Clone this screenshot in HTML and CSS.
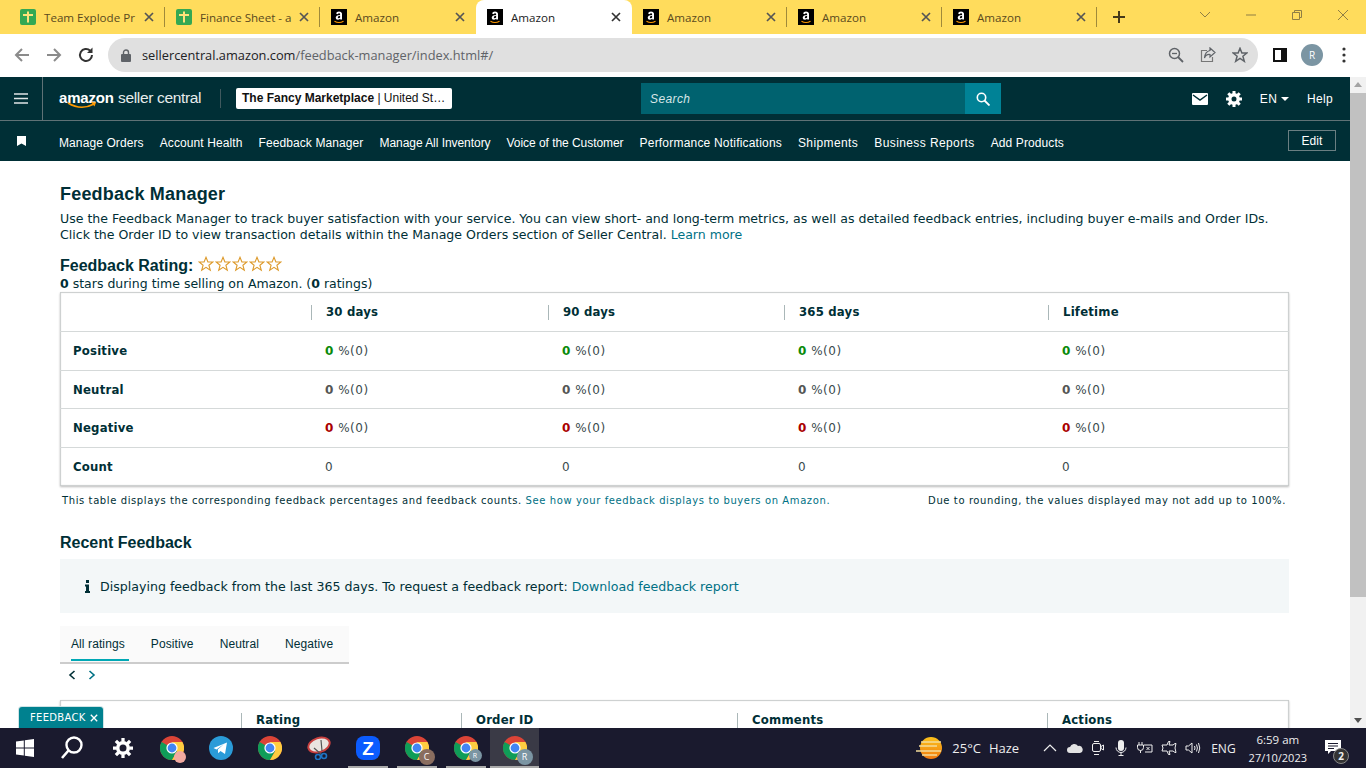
FILE: index.html
```html
<!DOCTYPE html>
<html lang="en">
<head>
<meta charset="utf-8">
<title>Feedback Manager</title>
<link rel="stylesheet" href="styles.css">
</head>
<body>
<svg class="defs" width="0" height="0" aria-hidden="true">
  <symbol id="chrome" viewBox="0 0 24 24">
    <circle cx="12" cy="12" r="12" fill="#db4437"/>
    <path d="M12 12 1.6 6A12 12 0 0 0 12 24l5.2-9z" fill="#0f9d58"/>
    <path d="M12 6h10.4A12 12 0 0 1 12 24l5.2-9z" fill="#ffcd40"/>
    <circle cx="12" cy="12" r="5.6" fill="#fff"/>
    <circle cx="12" cy="12" r="4.4" fill="#4285f4"/>
  </symbol>
  <symbol id="amz" viewBox="0 0 16 16">
    <rect width="16" height="16" fill="#000"/>
    <path d="M3.5 12.2q4.5 2.6 9 0" fill="none" stroke="#f90" stroke-width="1.2"/>
    <path d="M5 4.6q.5-2 3-2t3 2v6h-1.7l-.2-.8q-1 1-2.300 1-2.100 0-2.100-2.100 0-2.300 4.400-2.700v-.6q0-1.200-1-1.200t-1.300 1zM9.100 6.800q-2.300.3-2.300 1.500 0 1 .9 1t1.400-.8z" fill="#fff" fill-rule="evenodd"/>
  </symbol>
  <symbol id="sheet" viewBox="0 0 16 16">
    <rect width="16" height="16" rx="2" fill="#34a853"/>
    <path d="M7 2.500h2v11H7zM3 5h10v2H3z" fill="#ffe27a"/>
  </symbol>
  <symbol id="star" viewBox="0 0 16 16">
    <path d="M8 1.300 9.900 6h5l-4 3.200 1.400 5.100L8 11.400l-4.300 2.900 1.400-5.100-4-3.200h5z" fill="#fff" stroke="#dd9a2b" stroke-width="1.100"/>
  </symbol>
  <symbol id="x" viewBox="0 0 10 10">
    <path d="M1 1l8 8M9 1 1 9" fill="none" stroke="currentColor" stroke-width="1.700"/>
  </symbol>
</svg>

<div class="tabstrip">
  <div class="tab wide"><svg class="fav"><use href="#sheet"/></svg><span class="tab-title">Team Explode Pr</span><svg class="tab-x"><use href="#x"/></svg></div>
  <div class="tab"><svg class="fav"><use href="#sheet"/></svg><span class="tab-title">Finance Sheet - a</span><svg class="tab-x"><use href="#x"/></svg></div>
  <div class="tab wide no-sep"><svg class="fav"><use href="#amz"/></svg><span class="tab-title">Amazon</span><svg class="tab-x"><use href="#x"/></svg></div>
  <div class="tab wide active"><svg class="fav"><use href="#amz"/></svg><span class="tab-title">Amazon</span><svg class="tab-x"><use href="#x"/></svg></div>
  <div class="tab"><svg class="fav"><use href="#amz"/></svg><span class="tab-title">Amazon</span><svg class="tab-x"><use href="#x"/></svg></div>
  <div class="tab"><svg class="fav"><use href="#amz"/></svg><span class="tab-title">Amazon</span><svg class="tab-x"><use href="#x"/></svg></div>
  <div class="tab"><svg class="fav"><use href="#amz"/></svg><span class="tab-title">Amazon</span><svg class="tab-x"><use href="#x"/></svg></div>
  <svg class="newtab" width="14" height="14" viewBox="0 0 14 14"><path d="M7 1v12M1 7h12" stroke="#45391a" stroke-width="2"/></svg>
  <div class="winctl">
    <svg width="46" height="12" viewBox="0 0 46 12"><path d="M18 3l5 5 5-5" fill="none" stroke="#8f7e45"/></svg>
    <svg width="46" height="12" viewBox="0 0 46 12"><path d="M18 6h10" stroke="#8f7e45"/></svg>
    <svg width="46" height="12" viewBox="0 0 46 12"><path d="M18.500 3.500h7v7h-7zM20.500 3.500v-2h7v7h-2" fill="none" stroke="#8f7e45"/></svg>
    <svg width="46" height="12" viewBox="0 0 46 12"><path d="M18 1l10 10M28 1L18 11" stroke="#8f7e45"/></svg>
  </div>
</div>

<div class="toolbar">
  <svg class="tb-ic" width="18" height="18" viewBox="0 0 18 18"><path d="M16 9H3M9 3 3 9l6 6" fill="none" stroke="#8b8b8b" stroke-width="2"/></svg>
  <svg class="tb-ic" width="18" height="18" viewBox="0 0 18 18"><path d="M2 9h13M9 3l6 6-6 6" fill="none" stroke="#8b8b8b" stroke-width="2"/></svg>
  <svg class="tb-ic" width="18" height="18" viewBox="0 0 18 18"><path d="M15 9a6 6 0 1 1-1.800-4.300" fill="none" stroke="#333" stroke-width="2"/><path d="M15.500 1.500v5.500H10z" fill="#333"/></svg>
  <div class="omnibox">
    <svg width="10" height="13" viewBox="0 0 10 13"><path d="M2.500 5V3.500a2.500 2.500 0 0 1 5 0V5" fill="none" stroke="#5f6368" stroke-width="1.400"/><rect y="5" width="10" height="8" rx="1" fill="#5f6368"/></svg>
    <span class="url"><span class="url-host">sellercentral.amazon.com</span>/feedback-manager/index.html#/</span>
    <span class="omni-right">
      <svg width="16" height="16" viewBox="0 0 16 16"><circle cx="6.500" cy="6.500" r="5" fill="none" stroke="#5f6368" stroke-width="1.500"/><path d="M10 10l5 5" stroke="#5f6368" stroke-width="1.800"/><path d="M4 6.500h5" stroke="#5f6368" stroke-width="1.300"/></svg>
      <svg width="16" height="16" viewBox="0 0 16 16"><path d="M7 3.500H1.500v11h11V10" fill="none" stroke="#777" stroke-width="1.200"/><path d="M10 1l5 4.500L10 10V7.500Q6 7 4.500 11 5 4.500 10 3.500z" fill="none" stroke="#5f6368" stroke-width="1.200"/></svg>
      <svg width="16" height="16" viewBox="0 0 16 16"><path d="M8 1.300 9.900 6h5l-4 3.200 1.400 5.100L8 11.400l-4.300 2.900 1.400-5.100-4-3.200h5z" fill="none" stroke="#5f6368" stroke-width="1.500"/></svg>
    </span>
  </div>
  <svg class="panel" width="14" height="14" viewBox="0 0 14 14"><rect width="14" height="14" fill="#111"/><rect x="2" y="2" width="6" height="10" fill="#fff"/></svg>
  <span class="avatar">R</span>
  <svg class="menu-dots" width="4" height="16" viewBox="0 0 4 16"><circle cx="2" cy="2" r="1.600" fill="#333"/><circle cx="2" cy="8" r="1.600" fill="#333"/><circle cx="2" cy="14" r="1.600" fill="#333"/></svg>
</div>

<div class="viewport">
  <div class="page">
    <header class="masthead">
      <div class="burger"><svg width="14" height="11" viewBox="0 0 14 11"><path d="M0 1h14M0 5.500h14M0 10h14" stroke="#dfe5e6" stroke-width="1.600"/></svg></div>
      <div class="logo"><span class="logo-a">amazon</span> <span class="logo-b">seller central</span>
        <svg class="logo-smile" width="30" height="8" viewBox="0 0 30 8"><path d="M1 1q13 8 26 1" fill="none" stroke="#f90" stroke-width="1.600"/><path d="M24 0l5 .5-1.500 4z" fill="#f90"/></svg>
      </div>
      <div class="store"><b>The Fancy Marketplace</b> | United St…</div>
      <div class="search"><span class="search-text">Search</span><span class="search-btn"><svg width="14" height="14" viewBox="0 0 14 14"><circle cx="5.500" cy="5.500" r="4.200" fill="none" stroke="#fff" stroke-width="1.600"/><path d="M8.500 8.500l5 5" stroke="#fff" stroke-width="1.800"/></svg></span></div>
      <div class="mast-right">
        <svg width="16" height="12" viewBox="0 0 16 12"><rect width="16" height="12" rx="1" fill="#fff"/><path d="M1 2l7 5 7-5" fill="none" stroke="#002f36" stroke-width="1.500"/></svg>
        <svg width="16" height="16" viewBox="0 0 16 16"><circle cx="8" cy="8" r="4.200" fill="none" stroke="#fff" stroke-width="3.400"/><path d="M8 0v3M8 13v3M0 8h3M13 8h3M2.300 2.300l2.100 2.100M11.600 11.600l2.100 2.100M13.700 2.300l-2.100 2.100M4.400 11.600l-2.100 2.100" stroke="#fff" stroke-width="3"/></svg>
        <span class="lang">EN<i class="caret"></i></span>
        <span class="help">Help</span>
      </div>
    </header>
    <nav class="navbar">
      <svg class="bookmark" width="9" height="10" viewBox="0 0 9 10"><path d="M0 0h9v10L4.500 7.500 0 10z" fill="#fff"/></svg>
      <a>Manage Orders</a><a>Account Health</a><a>Feedback Manager</a><a class="tight">Manage All Inventory</a><a class="tight">Voice of the Customer</a><a class="loose">Performance Notifications</a><a class="looser">Shipments</a><a class="looser">Business Reports</a><a>Add Products</a>
      <span class="edit">Edit</span>
    </nav>

    <main class="content">
      <h1>Feedback Manager</h1>
      <p class="intro">Use the Feedback Manager to track buyer satisfaction with your service. You can view short- and long-term metrics, as well as detailed feedback entries, including buyer e-mails and Order IDs. Click the Order ID to view transaction details within the Manage Orders section of Seller Central. <a class="link">Learn more</a></p>
      <div class="rating-head"><h2>Feedback Rating:</h2><span class="stars"><svg><use href="#star"/></svg><svg><use href="#star"/></svg><svg><use href="#star"/></svg><svg><use href="#star"/></svg><svg><use href="#star"/></svg></span></div>
      <p class="rating-sub"><b>0</b> stars during time selling on Amazon. (<b>0</b> ratings)</p>

      <table class="card metrics">
        <colgroup><col class="m1"><col class="m2"><col class="m3"><col class="m4"><col></colgroup>
        <thead><tr><th></th><th><span>30 days</span></th><th><span>90 days</span></th><th><span>365 days</span></th><th><span>Lifetime</span></th></tr></thead>
        <tbody>
          <tr><th>Positive</th><td><b class="pos">0</b> %(0)</td><td><b class="pos">0</b> %(0)</td><td><b class="pos">0</b> %(0)</td><td><b class="pos">0</b> %(0)</td></tr>
          <tr><th>Neutral</th><td><b class="neu">0</b> %(0)</td><td><b class="neu">0</b> %(0)</td><td><b class="neu">0</b> %(0)</td><td><b class="neu">0</b> %(0)</td></tr>
          <tr><th>Negative</th><td><b class="neg">0</b> %(0)</td><td><b class="neg">0</b> %(0)</td><td><b class="neg">0</b> %(0)</td><td><b class="neg">0</b> %(0)</td></tr>
          <tr><th>Count</th><td>0</td><td>0</td><td>0</td><td>0</td></tr>
        </tbody>
      </table>
      <div class="note"><span>This table displays the corresponding feedback percentages and feedback counts. <a class="link">See how your feedback displays to buyers on Amazon.</a></span><span>Due to rounding, the values displayed may not add up to 100%.</span></div>

      <h2 class="recent">Recent Feedback</h2>
      <div class="infobox"><svg width="5" height="13" viewBox="0 0 5 13"><rect x="1" width="3" height="3" fill="#002f36"/><path d="M0 4.500h4V11h1v2H0v-2h1V6.500H0z" fill="#002f36"/></svg><span>Displaying feedback from the last 365 days. To request a feedback report: <a class="link">Download feedback report</a></span></div>

      <div class="rtabs"><a class="on">All ratings</a><a>Positive</a><a>Neutral</a><a>Negative</a></div>
      <div class="pager">
        <svg width="8" height="10" viewBox="0 0 8 10"><path d="M6.500 1l-4.500 4 4.500 4" fill="none" stroke="#002f36" stroke-width="1.600"/></svg>
        <svg width="8" height="10" viewBox="0 0 8 10"><path d="M1.500 1l4.500 4-4.500 4" fill="none" stroke="#007185" stroke-width="1.600"/></svg>
      </div>

      <table class="card recent-table">
        <colgroup><col class="r1"><col class="r2"><col class="r3"><col class="r4"><col></colgroup>
        <thead><tr><th></th><th><span>Rating</span></th><th><span>Order ID</span></th><th><span>Comments</span></th><th><span>Actions</span></th></tr></thead>
      </table>
    </main>
    <div class="feedback-tab">FEEDBACK <svg class="fb-x"><use href="#x"/></svg></div>
  </div>
  <div class="scrollbar">
    <svg width="16" height="16" viewBox="0 0 16 16"><path d="M8 5l4 5H4z" fill="#a3a3a3"/></svg>
    <div class="thumb"></div>
    <svg class="sb-down" width="16" height="16" viewBox="0 0 16 16"><path d="M8 11l4-5H4z" fill="#505050"/></svg>
  </div>
</div>

<footer class="taskbar">
  <div class="tb-item"><svg width="18" height="18" viewBox="0 0 18 18"><path d="M0 2.500 7.800 1.400v7.100H0zM8.800 1.300 18 0v8.500H8.800zM0 9.500h7.800v7.100L0 15.500zM8.800 9.500H18V18l-9.200-1.300z" fill="#fff"/></svg></div>
  <div class="tb-item search-ic"><svg width="24" height="26" viewBox="0 0 24 26"><circle cx="14" cy="10" r="7.500" fill="none" stroke="#fff" stroke-width="2.400"/><path d="M8.500 15.500 2 23" stroke="#fff" stroke-width="2.600"/></svg></div>
  <div class="tb-item"><svg width="20" height="20" viewBox="0 0 16 16"><circle cx="8" cy="8" r="4.200" fill="none" stroke="#fff" stroke-width="2.800"/><path d="M8 0v3M8 13v3M0 8h3M13 8h3M2.300 2.300l2.100 2.100M11.600 11.600l2.100 2.100M13.700 2.300l-2.100 2.100M4.400 11.600l-2.100 2.100" stroke="#fff" stroke-width="2.600"/></svg></div>
  <div class="tb-item"><span class="appwrap"><svg class="app"><use href="#chrome"/></svg><i class="badge pink"></i></span></div>
  <div class="tb-item"><svg class="app" viewBox="0 0 24 24"><circle cx="12" cy="12" r="12" fill="#2a9bd8"/><path d="M4.500 12 18 6.500 16 18l-4.500-3-2.300 2.200-.4-3.700 6.200-5.500L7.500 13.500z" fill="#fff"/></svg></div>
  <div class="tb-item"><svg class="app"><use href="#chrome"/></svg></div>
  <div class="tb-item"><svg class="app" viewBox="0 0 24 24"><ellipse cx="12" cy="9" rx="11" ry="7" transform="rotate(-18 12 9)" fill="#e9e4e0" stroke="#c9403f" stroke-width="2"/><path d="M7 12l8 7M14 4l1 11" stroke="#555" stroke-width="1.200"/><circle cx="17" cy="20" r="2.500" fill="none" stroke="#1d74c4" stroke-width="1.600"/><circle cx="11" cy="21" r="2.500" fill="none" stroke="#1d74c4" stroke-width="1.600"/></svg></div>
  <div class="tb-item run"><svg class="app" viewBox="0 0 24 24"><rect width="24" height="24" rx="8" fill="#0b5cff"/><text x="12" y="19" text-anchor="middle" class="zoom-z">Z</text></svg></div>
  <div class="tb-item run"><span class="appwrap"><svg class="app"><use href="#chrome"/></svg><i class="badge brown">C</i></span></div>
  <div class="tb-item run"><span class="appwrap"><svg class="app"><use href="#chrome"/></svg><i class="badge slate small">R</i></span></div>
  <div class="tb-item run current"><span class="appwrap"><svg class="app"><use href="#chrome"/></svg><i class="badge slate">R</i></span></div>

  <div class="tray">
    <svg class="sun" width="28" height="24" viewBox="0 0 28 24"><defs><linearGradient id="sg" x1="0" y1="0" x2="0" y2="1"><stop offset="0" stop-color="#fcc21b"/><stop offset="1" stop-color="#f07a10"/></linearGradient></defs><circle cx="15" cy="12" r="11" fill="url(#sg)"/><path d="M5 6h20M3 10h18M0 15h25M6 19h15" stroke="#f3dc9b" stroke-width="1.500"/></svg>
    <span class="temp">25°C</span><span class="haze">Haze</span>
    <svg class="ti t-caret" width="14" height="8" viewBox="0 0 14 8"><path d="M1 7l6-6 6 6" fill="none" stroke="#eee" stroke-width="1.200"/></svg>
    <svg class="ti t-cloud" width="16" height="10" viewBox="0 0 16 10"><path d="M3 10a3 3 0 0 1 0-6 4.500 4.500 0 0 1 8-1 3.500 3.500 0 0 1 2 7z" fill="#e3e3e3"/></svg>
    <svg class="ti t-meet" width="12" height="16" viewBox="0 0 12 16"><rect x=".5" y="3.500" width="8" height="8" rx="1.500" fill="none" stroke="#eee"/><path d="M9 6.500l2.500-1.500v5L9 8.500zM2 1.500h5M2 14.500h5" fill="none" stroke="#eee"/></svg>
    <svg class="ti t-mic" width="12" height="16" viewBox="0 0 12 16"><rect x="3" y="0" width="6" height="11" rx="3" fill="#eee"/><path d="M1 7.500a5 5 0 0 0 10 0M6 12.500V15M3.500 15.500h5" fill="none" stroke="#eee"/></svg>
    <svg class="ti" width="16" height="12" viewBox="0 0 16 12"><path d="M2 0v3M5 0v3M.5 3h6v2.500a3 3 0 0 1-6 0zM3.500 8.500V11M7 3h8v7H8M9.500 5l3 3M12.500 5l-3 3" fill="none" stroke="#eee"/></svg>
    <svg class="ti" width="16" height="14" viewBox="0 0 16 14"><path d="M1 4h5l1.500-3.500h1.500L8 4h4l2-1.500h1L14 7l1 4.500h-1l-2-1.500H8l1 3.500H7.500L6 10H1l1-3z" fill="none" stroke="#eee"/></svg>
    <svg class="ti" width="16" height="12" viewBox="0 0 16 12"><path d="M1 4h2.500L7 1v10L3.500 8H1zM9.500 4q1 2 0 4M11.500 2.500q1.800 3.500 0 7M13.500 1q2.500 5 0 10" fill="none" stroke="#eee"/></svg>
    <span class="eng">ENG</span>
    <div class="clock"><span class="time">6:59 am</span><span>27/10/2023</span></div>
    <span class="notif"><svg width="16" height="14" viewBox="0 0 16 14"><path d="M0 0h16v11H6l-3 3v-3H0z" fill="#fff"/><path d="M3 3.500h10M3 6h10M3 8.500h6" stroke="#1a1a2e"/></svg><i class="notif-count">2</i></span>
  </div>
</footer>
</body>
</html>
```

FILE: styles.css
```css
* { box-sizing: border-box; }
html, body { margin: 0; height: 768px; overflow: hidden; }
body { display: flex; flex-direction: column; width: 1366px; background: #fff; font-family: "DejaVu Sans", sans-serif; color: #002f36; }
.defs { display: block; height: 0; }
a { cursor: pointer; }

/* tab strip */
.tabstrip { height: 34px; flex: none; display: flex; align-items: stretch; background: #ffdc5c; padding-left: 9px; font-family: "Open Sans", sans-serif; font-size: 11.600px; color: #5a4a1e; }
.tab { width: 155px; flex: none; display: flex; align-items: center; padding: 0 11px; gap: 8px; position: relative; }
.tab.wide { width: 156px; }
.tab::after { content: ""; position: absolute; right: 0; top: 7px; height: 20px; width: 1px; background: #a08a3a; }
.tab.no-sep::after, .tab.active::after { display: none; }
.tab.active { background: #fff; border-radius: 8px 8px 0 0; color: #222; }
.fav { width: 16px; height: 16px; flex: none; }
.tab-title { flex: 1; min-width: 0; white-space: nowrap; }
.tab-x { width: 10px; height: 10px; flex: none; color: #555; }
.tab.active .tab-x { color: #333; }
.newtab { margin: 10px 0 0 15px; }
.winctl { margin-left: auto; display: flex; align-items: center; height: 30px; }

/* toolbar */
.toolbar { height: 43px; flex: none; display: flex; align-items: center; background: #fff; padding: 0 0 1px 13px; gap: 14px; }
.tb-ic { flex: none; }
.omnibox { width: 1150px; margin-left: -1px; height: 34px; background: #e0e0e0; border-radius: 17px; display: flex; align-items: center; padding: 0 10px 0 13px; gap: 11px; flex: none; }
.url { font-family: "Open Sans", sans-serif; font-size: 12.800px; color: #5f6368; }
.url-host { color: #202124; }
.omni-right { margin-left: auto; display: flex; gap: 16px; align-items: center; }
.panel { margin-left: 1px; flex: none; }
.avatar { width: 22px; height: 22px; border-radius: 50%; background: #7b95a3; color: #fff; font: 10px "Open Sans", sans-serif; display: flex; align-items: center; justify-content: center; flex: none; }
.menu-dots { margin-left: 5px; flex: none; }

/* viewport */
.viewport { flex: 1; min-height: 0; display: flex; }
.page { flex: 1; min-width: 0; position: relative; overflow: hidden; }
.scrollbar { width: 16px; flex: none; background: #f1f1f1; display: flex; flex-direction: column; }
.thumb { height: 504px; background: #c1c1c1; }
.sb-down { margin-top: auto; }

/* masthead */
.masthead { height: 44px; background: #002f36; border-bottom: 1px solid #5f7276; display: flex; align-items: center; color: #fff; font-family: "Liberation Sans", sans-serif; }
.burger { width: 43px; height: 100%; border-right: 1px solid #5f7276; display: flex; align-items: center; justify-content: center; flex: none; }
.logo { margin-left: 16px; width: 162px; height: 19px; border-right: 1px solid #40595e; position: relative; white-space: nowrap; line-height: 17px; flex: none; padding-bottom: 2px; }
.logo-a { font-size: 15px; font-weight: bold; letter-spacing: -.2px; }
.logo-b { font-size: 15.500px; letter-spacing: -.35px; color: #e6ecec; }
.logo-smile { position: absolute; left: 8px; top: 13px; }
.store { margin-left: 15px; width: 216px; height: 21px; background: #fff; border-radius: 2px; color: #111; font-size: 12px; line-height: 21px; padding-left: 6px; white-space: nowrap; flex: none; }
.search { margin-left: 189px; width: 360px; height: 31px; background: #00626f; display: flex; align-items: center; justify-content: space-between; flex: none; }
.search-text { margin-left: 9px; font-size: 12px; font-style: italic; letter-spacing: .4px; color: #d8e6e8; }
.search-btn { width: 36px; height: 100%; background: #008296; display: flex; align-items: center; justify-content: center; }
.mast-right { margin-left: auto; display: flex; align-items: center; gap: 18px; padding-right: 17px; font-size: 12px; letter-spacing: .3px; }
.lang { display: flex; align-items: center; gap: 4px; }
.caret { width: 0; height: 0; border: 4px solid transparent; border-top-color: #fff; border-bottom: 0; }

/* nav */
.navbar { height: 40px; background: #002f36; color: #fff; display: flex; align-items: center; padding: 3px 0 0 17px; font: 12px "Liberation Sans", sans-serif; letter-spacing: .1px; gap: 16px; white-space: nowrap; }
.navbar .tight { letter-spacing: -.05px; }
.navbar .loose { letter-spacing: .2px; }
.navbar .looser { letter-spacing: .4px; }
.bookmark { margin-right: 17px; margin-bottom: 4px; }
.edit { margin-left: auto; margin-right: 14px; margin-bottom: 4px; height: 21px; width: 48px; border: 1px solid #6a7f82; display: flex; align-items: center; justify-content: center; }

/* content */
.content { padding: 22px 61px 0 60px; }
h1 { margin: 0; font: bold 18px/22px "Liberation Sans", sans-serif; letter-spacing: .2px; }
.intro { margin: 6px 0 0; font-size: 12.550px; line-height: 16px; }
.link { color: #007185; }
.rating-head { display: flex; align-items: center; margin-top: 13px; height: 20px; }
h2 { margin: 0; font: bold 16px/20px "Liberation Sans", sans-serif; }
.stars { display: flex; gap: 1px; margin: -5px 0 0 5px; }
.stars svg { width: 16px; height: 16px; }
.rating-sub { margin: 0; font-size: 12.500px; line-height: 16px; }
.card { width: 100%; border-collapse: collapse; table-layout: fixed; box-shadow: inset 0 0 1px 1px #c9cccc, 0 1px 2px #bbb; background: #fff; font-size: 12px; }
.m1 { width: 251px; } .m2 { width: 237px; } .m3 { width: 236px; } .m4 { width: 264px; }
.r1 { width: 181px; } .r2 { width: 220px; } .r3 { width: 276px; } .r4 { width: 310px; }
.card th { text-align: left; font-weight: bold; font-size: 11.700px; letter-spacing: .2px; }
.card thead th { height: 39px; padding: 2px 0 0; }
.card thead th span { display: block; border-left: 1px solid #aab7b8; padding-left: 14px; line-height: 15px; }
.card tbody tr { height: 39px; border-top: 1px solid #d5d9d9; }
.card tbody tr:nth-child(2) { height: 38px; }
.card tbody tr:nth-child(2) > * { padding-top: 2px; }
.card tbody th { padding-left: 13px; }
.card td { padding: 0 0 0 14px; letter-spacing: .5px; color: #3a4a4d; }
.pos { color: #0a8a0a; } .neu { color: #555; } .neg { color: #a00; }
.note { margin-top: 9px; padding: 0 3px 0 2px; height: 12px; display: flex; justify-content: space-between; font-size: 10px; line-height: 12px; letter-spacing: .6px; white-space: nowrap; }
.recent { margin-top: 26px; }
.infobox { margin-top: 6px; height: 54px; background: #f3f7f8; display: flex; align-items: center; padding: 0 0 0 25px; gap: 10px; font-size: 12.600px; }
.rtabs { margin-top: 13px; width: 289px; height: 38px; background: #fafafa; border-bottom: 2px solid #ccc; display: flex; font: 12px "Liberation Sans", sans-serif; letter-spacing: .1px; padding-left: 11px; gap: 26px; }
.rtabs a { line-height: 36px; height: 36px; }
.rtabs a.on { border-bottom: 2px solid #00a8b5; height: 35px; padding-right: 4px; margin-right: -4px; }
.pager { display: flex; gap: 12px; padding: 6px 0 0 8px; height: 24px; }
.recent-table { margin-top: 12px; }

/* feedback tab */
.feedback-tab { position: absolute; left: 19px; bottom: 0; width: 84px; height: 21px; background: #00818f; border-radius: 3px 3px 0 0; box-shadow: 0 0 0 1px #cfe3e5; color: #fff; font: 10px/21px "DejaVu Sans", sans-serif; letter-spacing: .3px; padding-left: 11px; white-space: nowrap; }
.fb-x { width: 8px; height: 8px; margin-left: 1px; vertical-align: -1px; }

/* taskbar */
.taskbar { height: 40px; flex: none; background: #1a1a2e; display: flex; align-items: stretch; color: #eee; font-family: "Open Sans", sans-serif; font-size: 12px; }
.tb-item { width: 49px; display: flex; align-items: center; justify-content: center; position: relative; }
.search-ic { padding-right: 4px; }
.tb-item.run::after { content: ""; position: absolute; bottom: 0; left: 5px; right: 4px; height: 2px; background: #aaa; }
.tb-item.current { background: #3a3a46; }
.tb-item.current::after { left: 0; right: 0; }
.app { width: 24px; height: 24px; display: block; }
.appwrap { position: relative; display: block; }
.badge { position: absolute; right: -6px; bottom: -5px; width: 16px; height: 16px; border-radius: 50%; font: 9px/16px "Open Sans", sans-serif; text-align: center; color: #fff; }
.badge.small { right: -4px; bottom: -2px; width: 13px; height: 13px; line-height: 13px; font-size: 7px; }
.pink { background: #f2a9a0; width: 12px; height: 12px; right: -2px; bottom: -3px; }
.brown { background: #8a6d5f; }
.slate { background: #7b95a3; }
.zoom-z { font: bold 19px "Liberation Sans", sans-serif; fill: #fff; }
.tray { margin-left: auto; display: flex; align-items: center; padding-right: 25px; }
.temp { margin-left: 8px; font-size: 13px; }
.haze { margin-left: 8px; font-size: 13px; margin-right: 24px; }
.ti { margin: 0 4px; flex: none; }
.t-caret { margin-left: 0; margin-right: 6px; }
.t-cloud { margin-right: 5px; }
.t-meet { margin-right: 7px; }
.t-mic { margin-right: 6px; }
.eng { margin-left: 6px; }
.clock { margin-left: 13px; display: flex; flex-direction: column; align-items: center; line-height: 18px; font-size: 11px; padding-top: 1px; }
.time { font-size: 11.500px; }
.notif { position: relative; margin-left: 18px; width: 16px; height: 24px; display: block; padding-top: 4px; }
.notif-count { position: absolute; right: -8px; bottom: -4px; width: 16px; height: 16px; border-radius: 50%; background: #333; border: 1px solid #888; font: bold 10px/14px "Open Sans", sans-serif; text-align: center; color: #eee; }
```
